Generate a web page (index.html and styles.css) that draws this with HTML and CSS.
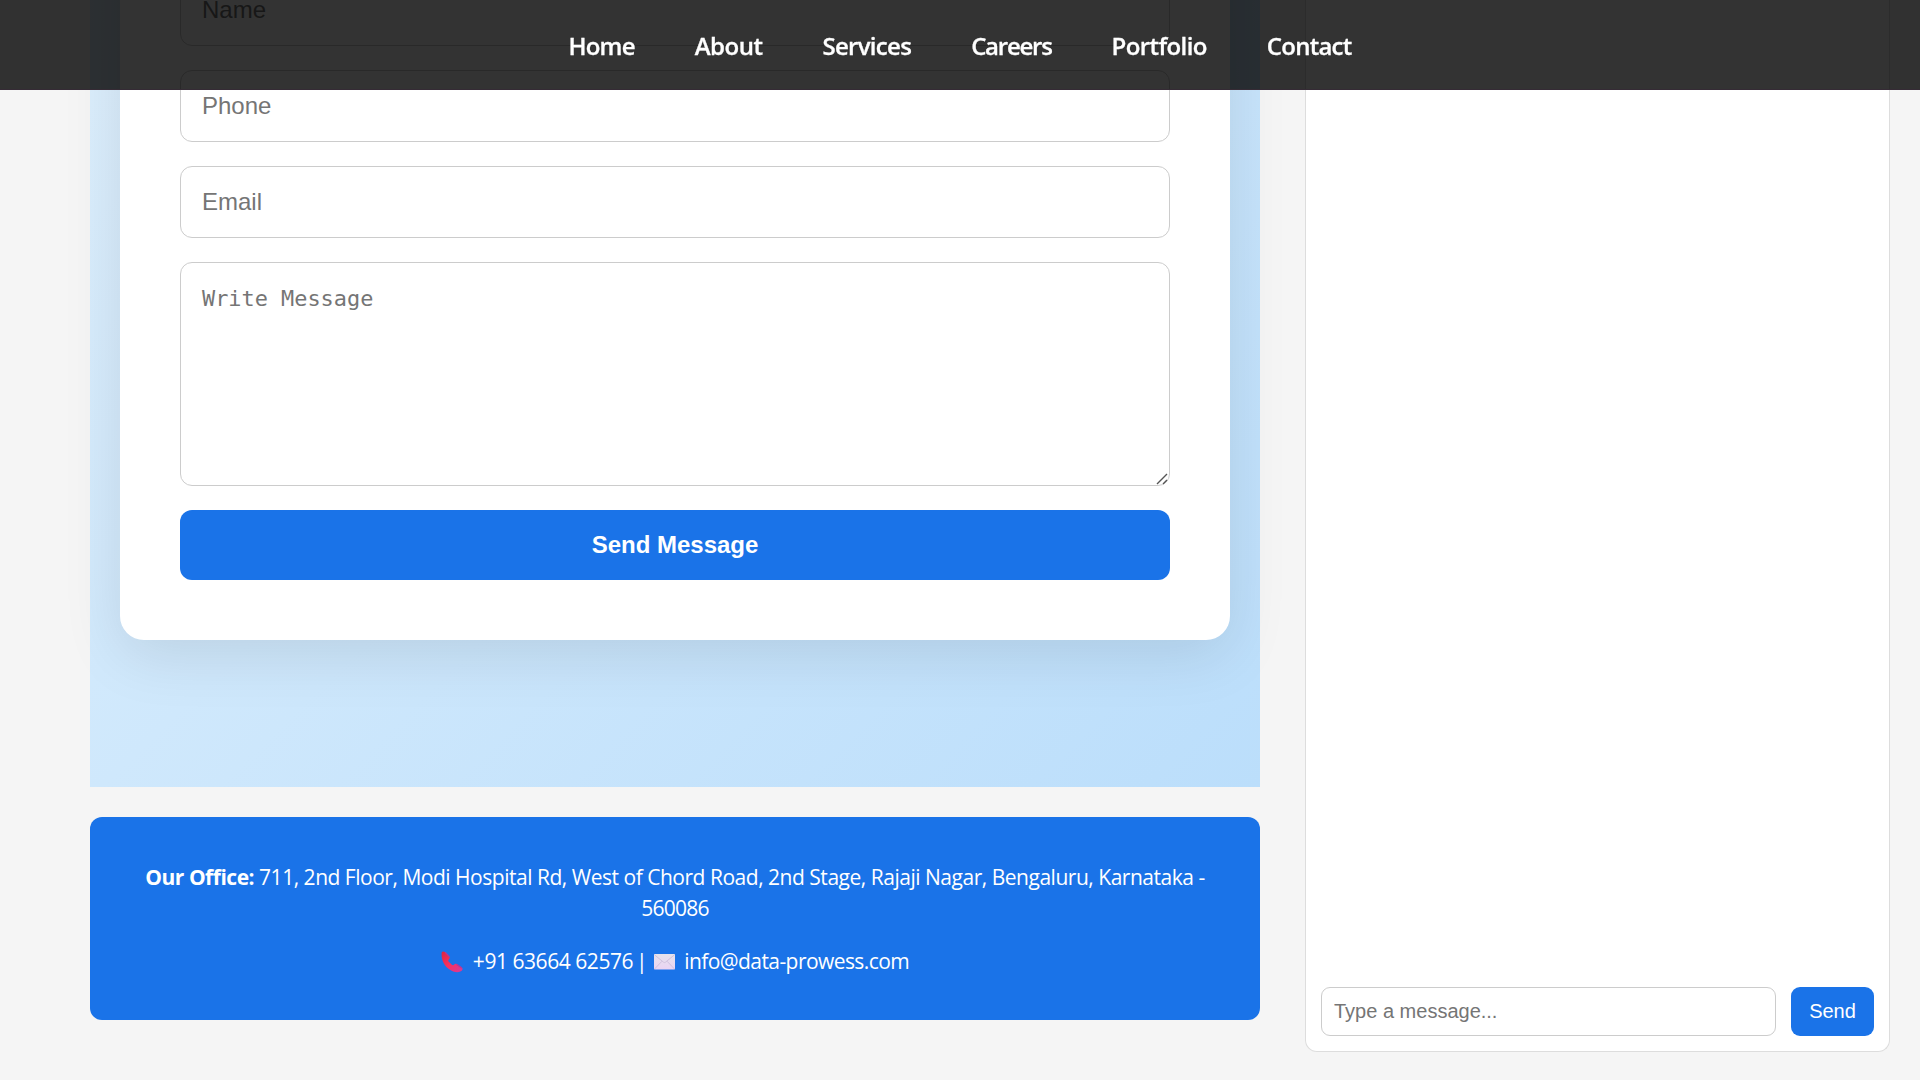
FILE: index.html
```html
<!DOCTYPE html>
<html lang="en">
<head>
<meta charset="utf-8">
<title>Contact</title>
<link rel="stylesheet" href="styles.css">
</head>
<body>
<nav class="navbar">
  <a class="nav-home">Home</a><a class="nav-about">About</a><a class="nav-services">Services</a><a class="nav-careers">Careers</a><a class="nav-portfolio">Portfolio</a><a class="nav-contact">Contact</a>
</nav>
<div class="page">
  <main class="content">
    <section class="contact">
      <form class="card">
        <input class="field" type="text" placeholder="Name">
        <input class="field" type="text" placeholder="Phone">
        <input class="field" type="text" placeholder="Email">
        <div class="message-wrap">
          <textarea class="field message" placeholder="Write Message"></textarea>
          <svg class="grip" width="12" height="12" viewBox="0 0 12 12"><path d="M1 11L11 1M7 11L11 7"/></svg>
        </div>
        <button class="submit" type="button">Send Message</button>
      </form>
    </section>
    <footer class="office">
      <p class="address"><strong>Our Office:</strong> <span class="line">711, 2nd Floor, Modi Hospital Rd, West of Chord Road, 2nd Stage, Rajaji Nagar, Bengaluru, Karnataka -</span><br><span class="pin">560086</span></p>
      <p class="reach">
        <svg class="phone" width="22" height="22" viewBox="0 0 22 22"><defs><linearGradient id="ph" x1="0" y1="0" x2="1" y2="1"><stop offset="0" stop-color="#dc2440"/><stop offset=".5" stop-color="#f8315f"/><stop offset="1" stop-color="#d43a9c"/></linearGradient></defs><path fill="url(#ph)" d="M.6 2C.8.300 3 0 4.200 1.200L8.300 5.500c.8 1 .3 2-.5 2.900-.9.800-.6 1.600.3 2.600l2.200 2.200c1 1 2 1.300 2.700.5.8-.9 2-1.200 3-.4l4.800 3.300c1.100.9 1.100 2.100-.1 3.200-1.900 1.600-5.300 1.800-8.500.6C5.600 18 0 11.500.6 2z"/><path fill="none" stroke="#ad3a9c" stroke-width="1.300" stroke-linecap="round" d="M4.500 1.600L8.100 5.500M16 13.600l4.500 3.100"/></svg>
        <span class="tel">+91 63664 62576<span class="bar">|</span></span>
        <svg class="mail" width="21" height="16" viewBox="0 0 21 16"><defs><linearGradient id="ml" x1="0" y1="0" x2="0" y2="1"><stop offset="0" stop-color="#e6e3ec"/><stop offset="1" stop-color="#ead3f3"/></linearGradient></defs><rect width="21" height="15.500" rx=".7" fill="url(#ml)"/><path fill="none" stroke="#cdbedb" stroke-width=".9" d="M.5.800L9.500 8.200q1 .7 2 0L20.500.800M.5 15L8 7.200M20.500 15L13 7.200"/></svg>
        <span class="email">info@data-prowess.com</span>
      </p>
    </footer>
  </main>
  <aside class="chat">
    <div class="chat-row">
      <input class="chat-input" type="text" placeholder="Type a message...">
      <button class="chat-send" type="button">Send</button>
    </div>
  </aside>
</div>
</body>
</html>
```
FILE: styles.css
```css
* { box-sizing: border-box; }
body {
  margin: 0;
  height: 1080px;
  overflow: hidden;
  background: #f5f5f5;
  font-family: "Open Sans", "Noto Sans", sans-serif;
}
.navbar {
  position: fixed;
  top: 0;
  left: 0;
  right: 0;
  z-index: 10;
  height: 90px;
  padding: 2px 0 0;
  display: flex;
  justify-content: center;
  align-items: center;
  gap: 60px;
  background: rgba(0, 0, 0, 0.8);
  border-bottom: 1px solid #352b35;
}
.navbar a {
  color: #fff;
  font-size: 24px;
  font-weight: 600;
  letter-spacing: -0.5px;
  white-space: nowrap;
  -webkit-text-stroke: 0.3px #fff;
}
.navbar .nav-home { letter-spacing: -0.8px; }
.navbar .nav-services { letter-spacing: -0.7px; }
.navbar .nav-careers { letter-spacing: -1.25px; }
.navbar .nav-portfolio { letter-spacing: -0.6px; }
.navbar .nav-contact { letter-spacing: -0.75px; }
.page {
  height: 1080px;
  padding: 0 30px 0 90px;
  display: flex;
  gap: 45px;
}
.content {
  width: 1170px;
  height: 1020px;
  display: flex;
  flex-direction: column;
  justify-content: flex-end;
  gap: 30px;
}
.contact {
  flex: none;
  height: 1150px;
  padding: 0 30px 147px;
  display: flex;
  flex-direction: column;
  justify-content: flex-end;
  background: linear-gradient(135deg, #e3f2fd, #bbdefb);
}
.card {
  height: 880px;
  padding: 60px;
  display: flex;
  flex-direction: column;
  justify-content: flex-end;
  gap: 24px;
  background: #fff;
  border-radius: 24px;
  box-shadow: 0 15px 60px rgba(0, 0, 0, 0.1);
}
.field {
  display: block;
  flex: none;
  width: 100%;
  height: 72px;
  padding: 21px;
  border: 1px solid #ccc;
  border-radius: 12px;
  background: #fff;
  font: 24px "Liberation Sans", sans-serif;
}
.field::placeholder, .chat-input::placeholder { color: #757575; }
.message-wrap { position: relative; flex: none; }
.message {
  height: 224px;
  padding-top: 22px;
  resize: none;
  font: 21.9px/28px "DejaVu Sans Mono", monospace;
}
.grip {
  position: absolute;
  right: 2px;
  bottom: 1px;
  fill: none;
  stroke: #555;
  stroke-width: 1.4;
}
.submit {
  flex: none;
  height: 70px;
  border: 0;
  border-radius: 12px;
  background: #1a73e8;
  color: #fff;
  font: bold 24px "Liberation Sans", sans-serif;
}
.office {
  flex: none;
  height: 203px;
  padding: 45px 30px 0;
  border-radius: 12px;
  background: #1a73e8;
  color: #fff;
  font-size: 21px;
  line-height: 31px;
  text-align: center;
  white-space: nowrap;
}
.office p { margin: 0; }
.address { letter-spacing: -0.48px; }
.pin { letter-spacing: -0.75px; }
.office .reach {
  margin-top: 22px;
  display: flex;
  justify-content: center;
  align-items: center;
}
.tel { margin: 0 7px 0 10px; letter-spacing: -0.45px; }
.bar { margin-left: 3px; }
.email { margin-left: 9px; letter-spacing: -0.57px; }
.chat {
  width: 585px;
  height: 1052px;
  padding: 15px;
  display: flex;
  flex-direction: column;
  justify-content: flex-end;
  background: #fff;
  border: 1px solid #ddd;
  border-top: 0;
  border-radius: 0 0 12px 12px;
}
.chat-row { display: flex; gap: 15px; }
.chat-input {
  flex: 1;
  height: 49px;
  padding: 0 12px;
  border: 1px solid #ccc;
  border-radius: 9px;
  font: 20px "Liberation Sans", sans-serif;
}
.chat-send {
  width: 83px;
  height: 49px;
  border: 0;
  border-radius: 9px;
  background: #1a73e8;
  color: #fff;
  font: 20px "Liberation Sans", sans-serif;
}
```
